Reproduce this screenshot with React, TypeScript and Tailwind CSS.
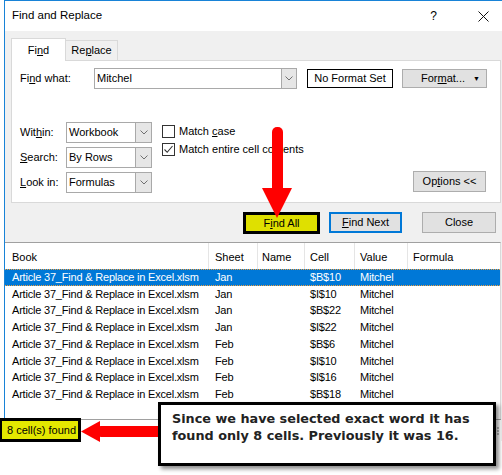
import type { ReactNode } from 'react';

const rows = [
  { sheet: 'Jan', cell: '$B$10' },
  { sheet: 'Jan', cell: '$I$10' },
  { sheet: 'Jan', cell: '$B$22' },
  { sheet: 'Jan', cell: '$I$22' },
  { sheet: 'Feb', cell: '$B$6' },
  { sheet: 'Feb', cell: '$I$10' },
  { sheet: 'Feb', cell: '$I$16' },
  { sheet: 'Feb', cell: '$B$18' },
];

function Chevron() {
  return (
    <svg width="8" height="5" viewBox="0 0 8 5">
      <path d="M0.5 0.5 L4 4 L7.5 0.5" fill="none" stroke="#707070" strokeWidth="1" />
    </svg>
  );
}

function Select({ value }: { value: string }) {
  return (
    <div className="flex h-[21px] w-[86px] border border-[#a9a9a9] bg-white">
      <div className="flex flex-1 items-center pl-[2px]">{value}</div>
      <div className="flex w-[16px] items-center justify-center border-l border-[#a9a9a9] bg-[#e6e6e6]">
        <Chevron />
      </div>
    </div>
  );
}

function Checkbox({ checked, children }: { checked?: boolean; children: ReactNode }) {
  return (
    <div className="flex h-[18px] items-center">
      <div className="flex h-[13px] w-[13px] items-center justify-center border border-[#333] bg-white">
        {checked && (
          <svg width="11" height="11" viewBox="0 0 11 11">
            <path d="M1.5 5.5 L4.2 8.3 L9.5 2" fill="none" stroke="#333" strokeWidth="1.1" />
          </svg>
        )}
      </div>
      <span className="ml-[4px]">{children}</span>
    </div>
  );
}

function Cells({ book, sheet, name, cell, value, formula, header }: {
  book: string; sheet: string; name: string; cell: string; value: string; formula: string; header?: boolean;
}) {
  const b = header ? 'border-[#e5e5e5] pt-[3px]' : 'border-transparent';
  return (
    <>
      <div className={`flex w-[204px] items-center border-r pl-[7px] ${b}`}>{book}</div>
      <div className={`flex w-[49px] items-center border-r pl-[6px] ${b}`}>{sheet}</div>
      <div className={`flex w-[47px] items-center border-r pl-[4px] ${b}`}>{name}</div>
      <div className={`flex w-[50px] items-center border-r pl-[5px] ${b}`}>{cell}</div>
      <div className={`flex w-[53px] items-center border-r pl-[5px] ${b}`}>{value}</div>
      <div className={`flex flex-1 items-center pl-[5px] ${header ? 'pt-[3px]' : ''}`}>{formula}</div>
    </>
  );
}

export default function App() {
  return (
    <div className="relative h-[475px] w-[502px] overflow-hidden bg-white font-['Liberation_Sans',Arial,sans-serif] text-[11px] text-black">
      <div className="ml-[4px] w-[504px] border-l border-t border-[#1883d7] bg-[#f0f0f0]">
        {/* title bar */}
        <div className="flex h-[30px] items-center bg-white pl-[7px]">
          <span className="text-[11.5px]">Find and Replace</span>
          <span className="ml-[328px] text-[12px]">?</span>
          <svg className="ml-[41px]" width="11" height="11" viewBox="0 0 11 11">
            <path d="M0.5 0.5 L10.5 10.5 M10.5 0.5 L0.5 10.5" stroke="#111" strokeWidth="1" />
          </svg>
        </div>

        <div className="px-[6px] pt-[7px]">
          {/* tabs */}
          <div className="flex h-[22px] items-end">
            <div className="relative z-10 -mb-px flex h-[23px] w-[55px] items-center justify-center border border-b-0 border-[#d9d9d9] bg-white">
              Fi<u>n</u>d
            </div>
            <div className="flex h-[20px] w-[52px] items-center justify-center border border-b-0 border-l-0 border-[#d9d9d9]">
              Re<u>p</u>lace
            </div>
          </div>

          {/* tab panel */}
          <div className="h-[143px] w-[490px] border border-[#d9d9d9] bg-white pt-[7px]">
            <div className="flex items-center pl-[8px]">
              <div className="w-[74px]">Fi<u>n</u>d what:</div>
              <div className="flex h-[21px] w-[203px] border border-[#a9a9a9] bg-white">
                <div className="flex flex-1 items-center pl-[2px]">Mitchel</div>
                <div className="flex w-[15px] items-center justify-center border-l border-[#a9a9a9] bg-[#e6e6e6]">
                  <Chevron />
                </div>
              </div>
              <div className="ml-[10px] flex h-[19px] w-[86px] items-center justify-center border border-black">
                No Format Set
              </div>
              <div className="relative ml-[9px] flex h-[19px] w-[85px] items-center border border-[#adadad] bg-[#e1e1e1] pl-[18px]">
                <span>For<u>m</u>at...</span>
                <span className="absolute right-[6px] top-[4px] text-[7px]">▼</span>
              </div>
            </div>

            <div className="mt-[33px] flex pl-[8px] pr-[14px]">
              <div className="flex flex-col gap-[4px]">
                <div className="flex items-center">
                  <div className="w-[46px]">Wit<u>h</u>in:</div>
                  <Select value="Workbook" />
                </div>
                <div className="flex items-center">
                  <div className="w-[46px]"><u>S</u>earch:</div>
                  <Select value="By Rows" />
                </div>
                <div className="flex items-center">
                  <div className="w-[46px]"><u>L</u>ook in:</div>
                  <Select value="Formulas" />
                </div>
              </div>
              <div className="ml-[10px]">
                <Checkbox>Match <u>c</u>ase</Checkbox>
                <Checkbox checked>Match entire cell co<u>n</u>tents</Checkbox>
              </div>
              <div className="flex-1" />
              <div className="mb-px flex h-[21px] w-[73px] items-center justify-center self-end border border-[#adadad] bg-[#e1e1e1]">
                Op<u>t</u>ions &lt;&lt;
              </div>
            </div>
          </div>

          {/* buttons */}
          <div className="mt-[9px] flex h-[22px] items-start pl-[232px]">
            <div className="flex h-[22px] w-[77px] items-center justify-center border-[3px] border-black bg-[#dfe000]">
              F<u>i</u>nd All
            </div>
            <div className="ml-[9px] flex h-[21px] w-[73px] items-center justify-center border-2 border-[#0078d7] bg-[#e1e1e1]">
              <u>F</u>ind Next
            </div>
            <div className="ml-[20px] flex h-[21px] w-[74px] items-center justify-center border border-[#adadad] bg-[#e1e1e1]">
              Close
            </div>
          </div>
        </div>

        {/* results list */}
        <div className="mt-[8px] h-[177px] w-[496px] border-r border-t border-[#a0a0a0] border-r-[#d9d9d9] bg-white">
          <div className="flex h-[26px]">
            <Cells header book="Book" sheet="Sheet" name="Name" cell="Cell" value="Value" formula="Formula" />
          </div>
          <div className="tracking-[-0.2px]">
            {rows.map((r, i) => (
              <div
                key={i}
                className={`flex h-[16.7px] ${
                  i === 0 ? 'border-y border-dotted border-[#f0a040] bg-[#0078d7] text-white' : ''
                }`}
              >
                <Cells book="Article 37_Find & Replace in Excel.xlsm" sheet={r.sheet} name="" cell={r.cell} value="Mitchel" formula="" />
              </div>
            ))}
          </div>
        </div>

        {/* status bar */}
        <div className="flex h-[22px] w-[496px] items-center justify-end border-t border-[#a0a0a0] bg-white pr-[2px]">
          <svg width="8" height="8" viewBox="0 0 8 8">
            <rect x="6" y="0" width="2" height="2" fill="#bbb" />
            <rect x="3" y="3" width="2" height="2" fill="#bbb" />
            <rect x="6" y="3" width="2" height="2" fill="#bbb" />
            <rect x="0" y="6" width="2" height="2" fill="#bbb" />
            <rect x="3" y="6" width="2" height="2" fill="#bbb" />
            <rect x="6" y="6" width="2" height="2" fill="#bbb" />
          </svg>
        </div>
      </div>

      {/* annotations */}
      <div className="absolute left-[-1px] top-[418px] flex h-[24px] w-[82px] items-center whitespace-nowrap border-[3px] border-black bg-[#e4e800] pl-[5px] text-[11px]">
        8 cell(s) found
      </div>

      <svg className="pointer-events-none absolute left-0 top-0" width="502" height="475" viewBox="0 0 502 475">
        <rect x="272" y="127" width="11" height="66" rx="5" fill="#ff0000" />
        <polygon points="262,188 292,188 277,218" fill="#ff0000" />
        <rect x="96" y="426" width="70" height="11" rx="5" fill="#ff0000" />
        <polygon points="100,421 100,442 81,431.5" fill="#ff0000" />
      </svg>

      <div className="absolute left-[158px] top-[402px] h-[64px] w-[338px] border-[3px] border-black bg-white pl-[11px] pt-[5px] font-['DejaVu_Sans',sans-serif] text-[12.8px] font-bold leading-[17px] text-[#222] shadow-[3px_3px_4px_rgba(0,0,0,0.45)]">
        Since we have selected exact word it has
        <br />
        found only 8 cells. Previously it was 16.
      </div>
    </div>
  );
}
